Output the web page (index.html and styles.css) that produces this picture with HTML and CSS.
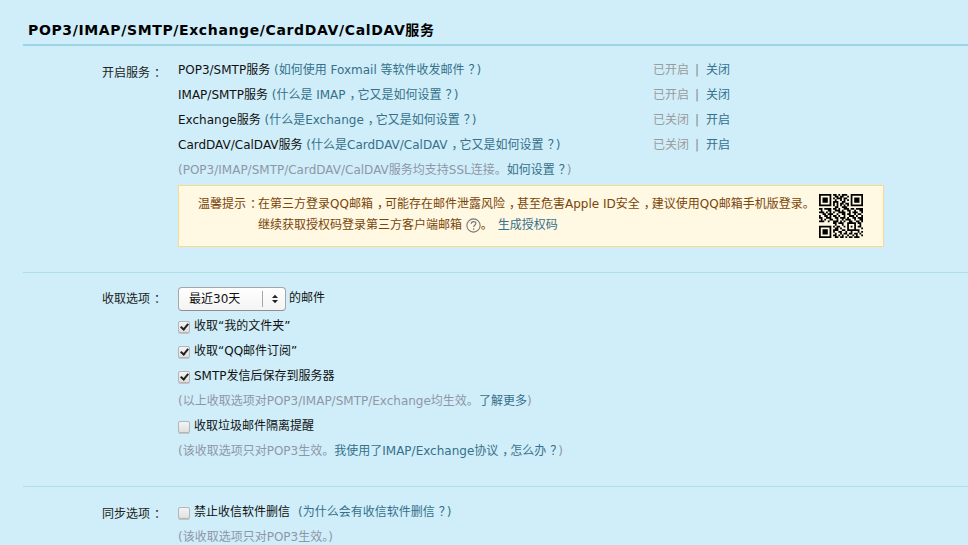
FILE: index.html
```html
<!DOCTYPE html>
<html lang="zh-CN">
<head>
<meta charset="utf-8">
<title>POP3/IMAP/SMTP/Exchange/CardDAV/CalDAV服务</title>
<link rel="stylesheet" href="styles.css">
</head>
<body>
<h1 class="title">POP3/IMAP/SMTP/Exchange/CardDAV/CalDAV服务</h1>

<section class="group first">
  <div class="label label-open">开启服务<span class="p">：</span></div>
  <div class="body">
    <div class="line svc"><div class="svc-name">POP3/SMTP服务 <a class="link">(如何使用 Foxmail 等软件收发邮件<span class="p">？</span>)</a></div><div class="svc-state"><span class="state">已开启</span><span class="pipe">|</span><a class="link">关闭</a></div></div>
    <div class="line svc"><div class="svc-name">IMAP/SMTP服务 <a class="link">(什么是 IMAP<span class="p">，</span>它又是如何设置<span class="p">？</span>)</a></div><div class="svc-state"><span class="state">已开启</span><span class="pipe">|</span><a class="link">关闭</a></div></div>
    <div class="line svc"><div class="svc-name">Exchange服务 <a class="link">(什么是Exchange<span class="p">，</span>它又是如何设置<span class="p">？</span>)</a></div><div class="svc-state"><span class="state">已关闭</span><span class="pipe">|</span><a class="link">开启</a></div></div>
    <div class="line svc"><div class="svc-name">CardDAV/CalDAV服务 <a class="link">(什么是CardDAV/CalDAV<span class="p">，</span>它又是如何设置<span class="p">？</span>)</a></div><div class="svc-state"><span class="state">已关闭</span><span class="pipe">|</span><a class="link">开启</a></div></div>
    <div class="line note">(POP3/IMAP/SMTP/CardDAV/CalDAV服务均支持SSL连接。<a class="link">如何设置<span class="p">？</span></a>)</div>
    <div class="tip">
      <div class="tip-label">温馨提示<span class="p">：</span></div>
      <div class="tip-text">
        <div>在第三方登录QQ邮箱<span class="p">，</span>可能存在邮件泄露风险<span class="p">，</span>甚至危害Apple ID安全<span class="p">，</span>建议使用QQ邮箱手机版登录。</div>
        <div>继续获取授权码登录第三方客户端邮箱 <svg class="help" viewBox="0 0 14 14" width="15" height="15"><circle cx="7" cy="7" r="6.2" fill="none" stroke="#77777a" stroke-width="1"/><path d="M4.9 5.4c0-1.3 1-2.1 2.2-2.1s2.1.8 2.1 1.9c0 1.6-2.1 1.6-2.1 3.3" fill="none" stroke="#77777a" stroke-width="1.1"/><rect x="6.500" y="9.600" width="1.2" height="1.3" fill="#77777a"/></svg>。<a class="link gen">生成授权码</a></div>
      </div>
      <svg class="qr" viewBox="0 0 25 25" width="44" height="44"><path fill="#000" fill-rule="evenodd" d="M0 0h7v7H0zM1 1v5h5V1zM2 2h3v3H2zM18 0h7v7h-7zM19 1v5h5V1zM20 2h3v3h-3zM0 18h7v7H0zM1 19v5h5v-5zM2 20h3v3H2z"/><path stroke="#000" stroke-width="1" fill="none" d="M8 .5h2M11 .5h1M13 .5h3M9 1.500h2M12 1.500h2M16 1.500h1M8 2.500h1M10 2.500h3M14 2.500h2M9 3.500h1M12 3.500h1M14 3.500h1M16 3.500h1M8 4.500h3M13 4.500h2M8 5.500h1M10 5.500h1M12 5.500h2M15 5.500h2M8 6.500h1M10 6.500h1M12 6.500h1M14 6.500h1M16 6.500h1M9 7.500h2M13 7.500h3M0 8.500h2M3 8.500h4M8 8.500h2M11 8.500h1M14 8.500h3M18 8.500h2M21 8.500h4M1 9.500h1M5 9.500h2M9 9.500h3M13 9.500h1M16 9.500h2M20 9.500h1M23 9.500h2M0 10.500h3M4 10.500h1M6 10.500h1M8 10.500h1M11 10.500h4M17 10.500h1M19 10.500h3M24 10.500h1M2 11.500h2M5 11.500h3M10 11.500h1M13 11.500h2M16 11.500h2M20 11.500h1M22 11.500h2M0 12.500h1M3 12.500h2M6 12.500h1M8 12.500h2M11 12.500h1M14 12.500h1M17 12.500h3M21 12.500h1M24 12.500h1M0 13.500h2M4 13.500h3M9 13.500h2M12 13.500h3M16 13.500h1M19 13.500h2M22 13.500h3M1 14.500h1M3 14.500h1M6 14.500h2M10 14.500h1M13 14.500h1M15 14.500h3M20 14.500h1M23 14.500h2M0 15.500h3M5 15.500h1M8 15.500h3M12 15.500h1M14 15.500h1M17 15.500h2M21 15.500h2M24 15.500h1M8 16.500h2M11 16.500h3M16 16.500h5M22 16.500h2M9 17.500h1M13 17.500h1M16 17.500h1M20 17.500h1M23 17.500h1M8 18.500h1M10 18.500h2M14 18.500h1M16 18.500h1M18 18.500h1M20 18.500h1M22 18.500h2M9 19.500h2M12 19.500h1M16 19.500h1M20 19.500h1M24 19.500h1M8 20.500h3M13 20.500h2M16 20.500h5M21 20.500h2M8 21.500h1M11 21.500h2M15 21.500h1M18 21.500h1M22 21.500h1M24 21.500h1M9 22.500h1M12 22.500h1M14 22.500h2M17 22.500h2M20 22.500h2M23 22.500h1M8 23.500h2M11 23.500h1M13 23.500h1M16 23.500h1M19 23.500h1M21 23.500h1M24 23.500h1M9 24.500h2M12 24.500h2M15 24.500h1M17 24.500h2M20 24.500h3"/></svg>
    </div>
  </div>
</section>

<section class="group second">
  <div class="label">收取选项<span class="p">：</span></div>
  <div class="body">
    <div class="select-row">
      <span class="select-wrap">
        <select class="select"><option>最近30天</option></select>
        <span class="select-arrows"><svg viewBox="0 0 8 10" width="8" height="10"><path d="M4 .8 7 4H1zM4 9.200 1 6h6z" fill="#222"/></svg></span>
      </span>
      <span class="select-after">的邮件</span>
    </div>
    <label class="line check"><input type="checkbox" checked>收取“我的文件夹”</label>
    <label class="line check"><input type="checkbox" checked>收取“QQ邮件订阅”</label>
    <label class="line check"><input type="checkbox" checked>SMTP发信后保存到服务器</label>
    <div class="line note">(以上收取选项对POP3/IMAP/SMTP/Exchange均生效。<a class="link">了解更多</a>)</div>
    <label class="line check"><input type="checkbox">收取垃圾邮件隔离提醒</label>
    <div class="line note">(该收取选项只对POP3生效。<a class="link">我使用了IMAP/Exchange协议<span class="p">，</span>怎么办<span class="p">？</span></a>)</div>
  </div>
</section>

<section class="group third">
  <div class="label label-sync">同步选项<span class="p">：</span></div>
  <div class="body">
    <div class="line check"><label class="check-inner"><input type="checkbox">禁止收信软件删信</label><a class="link why">(为什么会有收信软件删信<span class="p">？</span>)</a></div>
    <div class="line note">(该收取选项只对POP3生效。)</div>
  </div>
</section>
</body>
</html>
```
FILE: styles.css
```css
html, body {
  margin: 0;
  height: 545px;
  overflow: hidden;
}
body {
  background: #cfeef9;
  color: #111;
  font: 12px/25px "DejaVu Sans", "Noto Sans CJK SC", sans-serif;
}
.p {
  padding-left: 4px;
  letter-spacing: -4px;
}
.title {
  margin: 0 0 0 23px;
  padding: 20px 0 4px 5px;
  height: 20px;
  line-height: 20px;
  font-size: 14px;
  letter-spacing: .63px;
  font-weight: bold;
  color: #000;
  border-bottom: 2px solid #9bd5e6;
}
.group {
  display: grid;
  grid-template-columns: 162px 1fr;
  column-gap: 16px;
  position: relative;
}
.first { padding-top: 12px; height: 214px; }
.second { padding-top: 15px; height: 199px; }
.third { padding-top: 14px; }
.second::before, .third::before {
  content: "";
  position: absolute;
  left: 23px;
  right: 0;
  top: 0;
  border-top: 1px solid #aadfec;
}
.label {
  text-align: right;
  color: #222;
}
.label-open { padding-top: 3px; }
.label-sync { padding-top: 2px; }
.line { height: 25px; line-height: 25px; display: block; white-space: nowrap; }
.svc { display: flex; width: 706px; }
.svc-name { width: 476px; flex: none; }
.svc-state { display: flex; margin-left: -1px; }
.state { color: #9b9b9b; }
.pipe { color: #888; width: 16px; text-align: center; margin-right: 1px; }
.link { color: #36708a; cursor: pointer; }
.note { color: #8f96a8; }
.tip {
  display: flex;
  box-sizing: border-box;
  width: 706px;
  height: 62px;
  margin-top: 2px;
  padding: 8px 19px 0 19px;
  line-height: 21px;
  color: #7a4508;
  background: #fff8e3;
  border: 1px solid #fbd98a;
}
.tip-label { width: 60px; flex: none; white-space: nowrap; }
.tip-text { width: 561px; flex: none; white-space: nowrap; }
.help { vertical-align: -4px; margin: 0; }
.gen { margin-left: 5px; }
.qr { flex: none; }
.select-row {
  display: flex;
  align-items: center;
  gap: 3px;
  height: 24px;
  margin-bottom: 3px;
}
.select-after { line-height: 22px; height: 24px; }
.select-wrap { position: relative; display: block; width: 108px; height: 24px; }
.select {
  appearance: none;
  display: block;
  box-sizing: border-box;
  width: 108px;
  height: 24px;
  padding: 0 0 0 10px;
  font: 12px "DejaVu Sans", "Noto Sans CJK SC", sans-serif;
  color: #111;
  background: linear-gradient(#fff, #f4f4f4);
  border: 1px solid #a6a6a6;
  border-bottom-color: #8f8f8f;
  border-radius: 4px;
}
.select-arrows {
  position: absolute;
  right: 0;
  top: 4px;
  bottom: 4px;
  width: 23px;
  display: flex;
  align-items: center;
  justify-content: center;
  border-left: 1px solid #a6a6a6;
  pointer-events: none;
}
.check { display: flex; align-items: center; }
.check-inner { display: flex; align-items: center; }
.why { margin-left: 8px; }
input[type="checkbox"] {
  appearance: none;
  position: relative;
  flex: none;
  box-sizing: border-box;
  width: 12px;
  height: 12px;
  margin: 0 4px 0 0;
  background: linear-gradient(#f4f4f4, #e0e0e0);
  border: 1px solid #b5b5b5;
  border-radius: 2px;
  box-shadow: 0 1px 0 #c4c4c4;
}
input[type="checkbox"]:checked::after {
  content: "";
  position: absolute;
  left: 3px;
  top: 0;
  width: 3px;
  height: 6px;
  border: solid #222;
  border-width: 0 2px 2px 0;
  transform: rotate(40deg);
}
```
